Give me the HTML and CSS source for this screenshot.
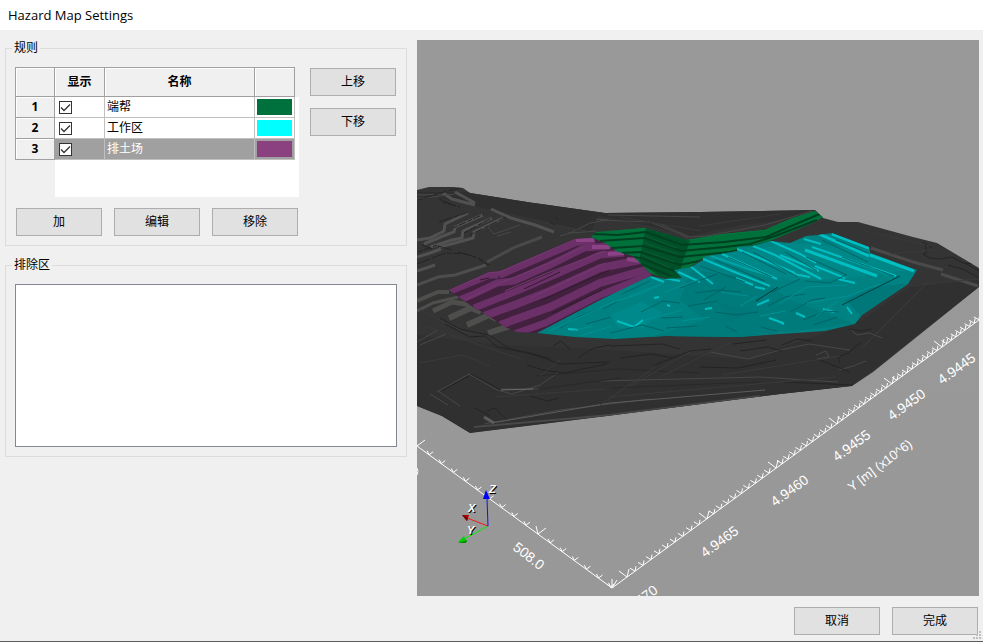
FILE: index.html
```html
<!DOCTYPE html>
<html lang="zh-CN">
<head>
<meta charset="utf-8">
<title>Hazard Map Settings</title>
<link rel="stylesheet" href="styles.css">
</head>
<body>
<header class="titlebar"><h1>Hazard Map Settings</h1></header>
<main class="content">
  <form class="settings">
    <fieldset class="group">
      <legend>规则</legend>
      <div class="rules">
        <div class="table-area">
          <table class="rule-table">
            <colgroup><col class="c-num"><col class="c-show"><col class="c-name"><col class="c-color"></colgroup>
            <thead>
              <tr><th></th><th scope="col">显示</th><th scope="col">名称</th><th></th></tr>
            </thead>
            <tbody>
              <tr><th scope="row">1</th><td><input type="checkbox" aria-label="端帮" checked></td><td>端帮</td><td><div class="swatch green"></div></td></tr>
              <tr><th scope="row">2</th><td><input type="checkbox" aria-label="工作区" checked></td><td>工作区</td><td><div class="swatch cyan"></div></td></tr>
              <tr class="selected"><th scope="row">3</th><td><input type="checkbox" aria-label="排土场" checked></td><td>排土场</td><td><div class="swatch purple"></div></td></tr>
            </tbody>
          </table>
        </div>
        <div class="order-buttons">
          <button type="button">上移</button>
          <button type="button">下移</button>
        </div>
      </div>
      <div class="row-buttons">
        <button type="button">加</button>
        <button type="button">编辑</button>
        <button type="button">移除</button>
      </div>
    </fieldset>
    <fieldset class="group">
      <legend>排除区</legend>
      <textarea class="exclusions" aria-label="排除区"></textarea>
    </fieldset>
  </form>
  <section class="viewer">
    <svg viewBox="417 40 562 556" preserveAspectRatio="xMidYMid slice" role="img" aria-label="3D">
      <defs>
        <linearGradient id="sky" x1="0" y1="0" x2="0" y2="1"><stop offset="0" stop-color="#999"/><stop offset="1" stop-color="#989898"/></linearGradient>
        <clipPath id="clip-land"><path d="M417 190L429 187H454L463 188L470 193L534 203L605 213L700 212L815 210L823 218L838 222L858 222L913 237L937 243L979 268V287L873 372L852 386L780 394L607 416L470 433L442 416L417 406Z"/></clipPath>
        <clipPath id="clip-purple"><path d="M449 290L489 272L500 271L575 239L592 238L605 243L620 252L633 256L652 275L600 301L537 333L517 332L505 327L487 315L470 305Z"/></clipPath>
        <clipPath id="clip-green"><path d="M591 237L596 232L645 228L687 240L723 234L765 230L790 219L815 211L823 217L815 222L770 241L737 251L702 259L690 267L678 270L683 277L668 279L650 273L640 263L633 256L618 252L605 243Z"/></clipPath>
        <clipPath id="clip-cyan"><path d="M537 333L600 300L650 276L665 279L682 278L674 270L691 267L703 260V257L737 251V247L752 246L770 241L790 243L806 236L818 235L832 233L869 247L870 253L917 270L908 284L862 315L855 324L825 331L780 334L740 337L665 336L615 339L575 337Z"/></clipPath>
      </defs>
      <rect x="417" y="40" width="562" height="556" fill="url(#sky)"/>

      <g clip-path="url(#clip-land)" fill="none">
        <rect x="417" y="180" width="562" height="260" fill="#343434"/>
        <path fill="#2f2f2f" d="M534 203L815 210L823 218L800 219L740 225L690 236L650 226Z"/>
        <path fill="#303030" d="M417 335L500 345L610 350L760 360L850 370L852 386L607 416L470 433L417 406Z"/>
        <path fill="#303030" d="M862 320L912 285L979 280V287L852 386L780 394L600 410Z"/>
        <path fill="#2f2f2f" d="M417 192L470 192L600 214L590 232L540 220L470 205Z"/>
        <g stroke="#515151" stroke-width="3">
          <path d="M491 209L511 218L535 225L554 232" />
          <path d="M443 193L452 199L475 205M455 192L475 203"/>
          <path d="M417 240L430 238L444 231L445 224L468 213"/>
          <path d="M424 244L443 236L454 232L455 227L483 215"/>
          <path d="M430 247L452 240L462 238L463 231L492 218"/>
          <path d="M439 247L455 243L473 238L474 232L503 218"/>
          <path d="M417 257L430 253L441 249M417 271L435 265"/>
          <path d="M417 285L438 277L455 275L486 265" stroke="#4d4d4d"/>
          <path d="M487 262L515 247L542 237" stroke="#494949"/>
          <path d="M871 248L913 262L943 270M941 274L978 286" stroke="#4a4a4a"/>
        </g>
        <g stroke="#4e4e4c" stroke-width="6">
          <path d="M417 301L438 292L449 292" stroke-width="4"/>
          <path d="M417 311L433 303L458 297" stroke-width="3"/>
          <path d="M433 311L452 302L472 305" stroke-width="5"/>
          <path d="M449 318L471 308L481 312"/>
          <path d="M467 325L489 315L497 319"/>
          <path d="M488 333L510 326"/>
        </g>
        <g stroke="#484848" stroke-width="1">
          <path d="M417 195L443 194M417 199L455 194M488 227L494 234L520 225M497 236L511 232M568 233L585 232L596 231M596 219L608 220M560 236L570 233L590 223L607 220M600 220L650 222L680 234L688 238"/>
          <path d="M608 215L700 217M660 224L690 237L706 236L765 225L812 211"/>
          <path d="M437 392L469 374L497 390L512 394L540 385L559 372M438 391L460 406M430 394L448 405M501 389L538 389M484 424L560 410L650 399"/>
          <path d="M474 427L610 415L760 396" stroke-width="2"/>
          <path d="M492 423L610 403L765 390" stroke="#5c5c5c"/>
          <path d="M501 390L533 389" stroke="#6a6a6a"/>
          <path d="M484 417L494 423" stroke="#5c5c5c" stroke-width="3"/>
          <path d="M420 345L446 334M417 342L438 330M600 381L760 377L838 382M710 352L748 359L780 350L809 344L850 350"/>
          <path d="M851 330L857 335L869 333L882 338M839 370L853 366L866 361M816 355L826 351L829 357L817 359"/>
        </g>
        <g stroke="#242424" stroke-width="1">
          <path d="M439 199L456 206M442 202L460 207M418 200L440 193L460 188M439 222L469 212M453 228L484 214M464 233L493 217M470 235L506 217M422 245L432 249M438 246L452 250M458 252L475 257M479 260L489 265M418 252L437 245M417 264L445 253L467 254L483 260" stroke-dasharray="5 1 8 2"/>
          <path d="M440 318L460 329L489 335L510 349L535 355L560 364L610 362M445 324L470 337L485 336L497 347L530 353L551 359M527 365L543 370L564 373L607 364M530 396L547 401L559 398"/>
          <path d="M469 376L441 391M471 374L501 390M487 411L495 408L507 420M475 408L490 416M553 346L561 341L571 350M578 358L594 348L610 345"/>
          <path d="M610 346L662 344L680 349M620 358L651 354L673 358M655 365L690 351L711 349M700 367L738 368L776 360M740 351L768 347L782 351M733 344L766 340M782 345L797 339L812 341"/>
          <path d="M925 244L927 252L923 254L930 258L940 259L952 257L963 263L972 264M948 265L962 269L978 277M923 242L932 248M965 263L979 271"/>
          <path d="M861 342L848 353L838 357L840 363M849 329L861 331L872 329M784 382L852 385M820 360L850 372M555 217L559 221M550 222L556 226"/>
          <path d="M536 376L618 369L700 373M540 389L620 378M610 388L760 382" stroke="#292929"/>
        </g>
        <g stroke="#3a3a3a" stroke-width="1">
          <path d="M420 310L470 335M425 326L521 359M419 363L462 355L490 366M550 225L587 231M540 376L560 360M495 397L606 389M609 397L836 377M722 375L840 356M862 348L928 282M900 287L977 279M890 254L934 250M861 230L930 246M700 226L780 214M620 217L702 231M630 386L690 352M600 405L655 367M660 377L729 343"/>
        </g>
      </g>

      <g clip-path="url(#clip-purple)" fill="none">
        <rect x="440" y="230" width="220" height="110" fill="#42213f"/>
        <g stroke="#6b3068" stroke-width="8">
          <path d="M449 291L488 275L501 274L576 242L595 240"/>
          <path d="M457 301L474 294L497 283L514 281L550 265L584 248L610 246" stroke-width="7"/>
          <path d="M474 308L517 291L550 277L600 255L624 253" stroke-width="7"/>
          <path d="M484 316L517 304L550 291L600 268L640 260"/>
          <path d="M500 325L550 307L600 283L652 268"/>
          <path d="M514 334L545 323L600 295L655 273" stroke-width="7"/>
        </g>
        <g stroke="#8b4386" stroke-width="4"><path d="M576 240L594 240M592 247L610 247M608 254L624 253M627 259L640 261"/></g>
        <g stroke="#753a71"><path d="M449 290L489 273L500 272L575 239M465 300L500 283L550 263L583 247M505 291L547 273L605 251M530 298L606 263"/></g>
        <g stroke="#331a31"><path d="M498 276L501 279M480 280L489 278M524 289L560 272M540 301L610 270M552 313L602 290"/></g>
      </g>

      <g clip-path="url(#clip-green)" fill="none">
        <rect x="585" y="205" width="245" height="80" fill="#00713a"/>
        <path fill="#005029" d="M646 228L690 240L680 270L684 278L665 281L639 261Z"/>
        <g stroke="#003f20" stroke-width="2">
          <path d="M593 234L618 235L646 232L682 245L724 242L766 237L789 227L822 213"/>
          <path d="M600 241L645 238L681 251L725 247L750 244L775 236L817 220"/>
          <path d="M612 248L643 246L680 257L730 252L770 242"/>
          <path d="M622 253L641 252L680 265L708 259"/>
          <path d="M633 257L641 258L682 274"/>
          <path d="M641 264L671 276"/>
        </g>
        <path stroke="#008045" d="M596 231L645 228M687 240L723 234L765 230L790 219L815 211"/>
        <path stroke="#07602f" d="M645 236L676 248M642 242L677 254M641 250L675 262M642 255L670 268"/>
      </g>

      <g clip-path="url(#clip-cyan)" fill="none">
        <rect x="530" y="225" width="395" height="120" fill="#008283"/>
        <path fill="#007b7c" d="M690 270L760 278L790 300L855 324L740 337L650 337L705 320L680 300Z"/>
        <path fill="#008788" d="M704 258L790 243L869 249L910 270L840 279L790 280Z"/>
        <path fill="#007778" d="M846 300L870 288L907 283L861 316ZM720 303L756 311L730 321Z"/>
        <path fill="#00898a" d="M610 315L641 302L663 312L643 328L618 327Z"/>
        <g stroke="#00bfc2" stroke-width="2">
          <path d="M703 259L732 271L770 286M722 254L777 279M737 249L757 257L795 273M753 246L775 255L821 279"/>
          <path d="M711 256L751 270L768 275" stroke="#00a3a5"/>
          <path d="M771 241L800 254L816 263M780 255L819 271"/>
          <path d="M819 234L869 256M832 234L869 248M805 250L877 276M870 255L914 271" stroke-width="3"/>
          <path d="M804 239L821 244M812 247L896 276M815 266L845 278"/>
          <path d="M690 266L713 284M678 272L700 282M664 278L680 281M736 278L753 285M838 279L855 283"/>
          <path d="M651 277L664 282M617 321L634 327L643 320M705 309L712 308M654 298L659 297M667 305L670 306M769 318L783 323M823 309L834 312M796 313L805 317M847 307L852 314M780 322L784 324"/>
          <path d="M757 305L769 300M793 274L810 277M755 287L765 289M568 329L578 330"/>
        </g>
        <g stroke="#006466" stroke-width="1">
          <path d="M700 266L745 282M715 260L765 281M728 257L772 277M742 252L786 274M753 252L798 277M785 252L817 271M806 257L847 275M822 240L868 262M836 240L868 253M842 257L894 276"/>
          <path d="M790 312L812 300L825 298M803 320L825 311L839 312M813 325L838 317M805 281L830 283L846 275M772 292L800 279M768 306L785 297L805 294"/>
          <path d="M756 301L778 287M842 305L870 291L900 276" stroke="#003c3e"/>
          <path d="M560 328L578 317L597 309M586 324L611 317M603 309L628 296M622 294L650 281M641 312L663 301L680 303M662 318L683 317M611 333L642 325L664 331M666 328L697 326M688 306L718 301M695 293L719 290L741 292M680 288L717 274M704 300L726 287M725 326L737 332M715 312L736 315L758 312M761 327L777 331"/>
        </g>
        <g stroke="#009192" stroke-width="1"><path d="M550 331L606 305L664 283M573 331L592 326M580 336L612 326M617 301L643 293L661 284M645 320L682 310M681 321L710 317M721 292L748 296M665 292L698 280M779 304L807 287L847 285M760 316L785 311M807 303L848 296L880 284M816 316L838 301M740 306L757 296M867 265L892 279"/></g>
      </g>

      <g class="axis">
        <path d="M417 446L612 588L979 320"/>
        <path d="M417 468q2 3 0 7"/>
        <path id="ticks"/>
      </g>
      <g class="axis-label">
        <text transform="translate(512 549) rotate(38)">508.0</text>
        <text transform="translate(640 606) rotate(-36)">470</text>
        <text transform="translate(705 558) rotate(-36)">4.9465</text>
        <text transform="translate(775 507) rotate(-36)">4.9460</text>
        <text transform="translate(837 462) rotate(-36)">4.9455</text>
        <text transform="translate(892 421) rotate(-36)">4.9450</text>
        <text transform="translate(942 385) rotate(-36)">4.9445</text>
        <text class="axis-name" transform="translate(852 492) rotate(-37)">Y [m] (x10^6)</text>
      </g>
      <g class="triad">
        <path stroke="#00f000" d="M488 526L466 538"/><path fill="#00d000" d="M458 542L464 536L467 542Z"/><path fill="#008c00" d="M458 543L467 540L466 543Z"/>
        <path stroke="#f01818" d="M488 526L467 518"/><path fill="#b00000" d="M462 515L469 515L467 521Z"/><path fill="#700000" d="M462 515L468 518L467 521Z"/>
        <path stroke="#1010f0" d="M488 526L487 498"/><path fill="#0000f0" d="M486 490L490 499H483Z"/>
        <g class="triad-shadow"><text x="490" y="494">Z</text><text x="469" y="513">X</text><text x="468" y="535">Y</text></g>
        <g class="triad-text"><text x="489" y="493">Z</text><text x="468" y="512">X</text><text x="467" y="534">Y</text></g>
      </g>
    </svg>
  </section>
</main>
<footer class="actions">
  <button type="button">取消</button>
  <button type="button">完成</button>
  <svg class="grip" viewBox="0 0 8 8" aria-hidden="true"><path d="M6 0h2v2h-2zM3 3h2v2h-2zM6 3h2v2h-2zM0 6h2v2h-2zM3 6h2v2h-2zM6 6h2v2h-2z"/></svg>
</footer>
<script src="ticks.js"></script>
</body>
</html>
```
FILE: styles.css
```css
* { box-sizing: border-box; }
body {
  margin: 0;
  min-height: 100vh;
  display: flex;
  flex-direction: column;
  background: #f0f0f0;
  border-bottom: 1px solid #5c5c5c;
  color: #000;
  font: 12px/16px "Noto Sans", "Noto Sans CJK SC", sans-serif;
}
.titlebar { height: 30px; padding: 0 8px; background: #fff; }
.titlebar h1 { margin: 0; font: 400 13px/30px "Open Sans", sans-serif; }
.content {
  flex: 1;
  display: grid;
  grid-template-columns: 402px minmax(0, 1fr);
  gap: 10px;
  padding: 10px 4px 0 5px;
}
.settings { display: flex; flex-direction: column; gap: 11px; }
.group {
  margin: 0;
  min-width: 0;
  padding: 11px 9px 9px;
  border: 1px solid #dcdcdc;
}
.group legend { padding: 0 2px; margin-left: -3px; line-height: 16px; }
.rules { display: flex; gap: 11px; }
.table-area {
  width: 284px;
  height: 130px;
  background: linear-gradient(#fff, #fff) 40px 30px no-repeat;
}
.rule-table {
  width: 280px;
  table-layout: fixed;
  border-collapse: separate;
  border-spacing: 0;
  border: solid #a0a0a0;
  border-width: 1px 0 0 1px;
}
.c-num { width: 39px; }
.c-show { width: 50px; }
.c-name { width: 150px; }
.c-color { width: 40px; }
.rule-table th {
  height: 21px;
  padding: 0;
  background: #f0f0f0;
  border: solid #a0a0a0;
  border-width: 0 1px 1px 0;
  box-shadow: inset 1px 1px #fff;
  font-weight: 700;
}
.rule-table thead th { height: 29px; }
.rule-table td {
  height: 21px;
  padding: 0 2px;
  border: solid #c0c0c0;
  border-width: 0 1px 1px 0;
}
.rule-table td:nth-child(2) { padding-left: 4px; }
.selected td { background: #a0a0a0; color: #fff; }
.rule-table input {
  appearance: none;
  display: block;
  width: 13px;
  height: 13px;
  margin: 0;
  border: 1px solid #333;
  background: #fff;
}
.rule-table input:checked {
  background: #fff url("data:image/svg+xml,%3Csvg xmlns='http://www.w3.org/2000/svg' viewBox='0 0 11 11'%3E%3Cpath d='M1 5.5L4 8.5L10 2.5' fill='none' stroke='%23333' stroke-width='1.3'/%3E%3C/svg%3E");
}
.swatch { height: 16px; }
.green { background: #00703c; }
.cyan { background: #0ff; }
.purple { background: #8b4080; }
.order-buttons { display: flex; flex-direction: column; gap: 12px; padding-top: 1px; }
.row-buttons { display: flex; gap: 12px; padding: 11px 1px 0; }
button {
  width: 86px;
  height: 28px;
  padding: 0;
  border: 1px solid #adadad;
  background: #e1e1e1;
  color: #000;
  font: inherit;
}
.exclusions {
  display: block;
  width: 100%;
  height: 163px;
  border: 1px solid #828790;
  background: #fff;
  resize: none;
  font: inherit;
}
.viewer { min-width: 0; }
.viewer svg { display: block; width: 100%; height: 100%; }
.axis { fill: none; stroke: #fff; stroke-width: 1; }
.axis-label { fill: #fff; font: 14px "Liberation Sans", sans-serif; }
.axis-name { font-size: 13px; }
.triad { stroke-width: 1; }
.triad text { font: italic 700 11px "Liberation Sans", sans-serif; }
.triad-shadow { fill: #000; }
.triad-text { fill: #fff; }
.actions {
  position: relative;
  display: flex;
  justify-content: flex-end;
  gap: 12px;
  padding: 11px 5px 6px;
}
.grip { position: absolute; right: 2px; bottom: 2px; width: 8px; height: 8px; fill: #bfbfbf; }
```
FILE: ticks.js
```js
// Major tick positions on each axis; minor ticks are spaced evenly between them.
const axes = [
  { majors: [[417, 446], [538, 534], [659, 622]], last: 612, major: [-2, -8, 8, -6], minor: [-2, -4, 4, -3] },
  { majors: [[627, 577], [707, 519], [776, 468], [837, 424], [892, 384], [942, 347], [988, 313]], last: 979, major: [-8, -6, 2, -8], minor: [-5, -3, 1, -5] }
];
let d = "M607 584L612 588L617 580M612 588V579";
for (const { majors, last, major, minor } of axes) {
  const steps = 10;
  for (let i = 0; i < majors.length - 1; i++) {
    const [x0, y0] = majors[i];
    const [x1, y1] = majors[i + 1];
    for (let k = 0; k < steps; k++) {
      const x = x0 + (x1 - x0) * k / steps;
      const y = y0 + (y1 - y0) * k / steps;
      if (x > last) continue;
      const [a, b, c, e] = k ? minor : major;
      d += `M${x + a} ${y + b}L${x} ${y}L${x + c} ${y + e}`;
    }
  }
}
document.getElementById("ticks").setAttribute("d", d);
```
